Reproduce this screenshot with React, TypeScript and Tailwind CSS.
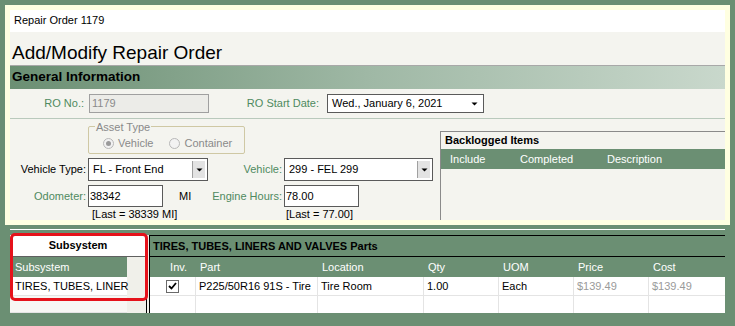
import React from "react";

const green = "text-[#4f8a60]";

function DropArrow({ boxed }: { boxed?: boolean }) {
  return (
    <div
      className={
        boxed
          ? "w-[13px] h-full bg-[#e3e3e3] border-l border-[#a0a0a0] flex items-center justify-center"
          : "w-[13px] h-full flex items-center justify-center"
      }
    >
      <svg width="7" height="4" viewBox="0 0 7 4">
        <path d="M0.5 0.5 L6.5 0.5 L3.5 3.5 Z" fill="#000" />
      </svg>
    </div>
  );
}

function Select({ value, width, boxed }: { value: string; width: string; boxed?: boolean }) {
  return (
    <div className={`${width} h-full bg-white border border-[#5a5a5a] flex items-stretch`}>
      <div className="flex-1 pl-[4px] flex items-center whitespace-nowrap overflow-hidden">{value}</div>
      <div className="py-[2px] pr-[2px]">
        <DropArrow boxed={boxed} />
      </div>
    </div>
  );
}

function Radio({ checked, label }: { checked?: boolean; label: string }) {
  return (
    <div className="flex items-center gap-[4px]">
      <div className="w-[11px] h-[11px] rounded-full border border-[#b8b8b8] bg-[#f2f2f2] flex items-center justify-center">
        {checked && <div className="w-[5px] h-[5px] rounded-full bg-[#9a9a9a]" />}
      </div>
      <span className="text-[#8a8a8a]">{label}</span>
    </div>
  );
}

function Checkbox() {
  return (
    <div className="w-[13px] h-[13px] bg-white border border-[#6a6a6a] flex items-center justify-center">
      <svg width="9" height="8" viewBox="0 0 9 8">
        <path d="M1 4 L3.5 6.5 L8 1" stroke="#000" strokeWidth="1.8" fill="none" />
      </svg>
    </div>
  );
}

const cols = [
  { name: "Inv.", w: "w-[46px]" },
  { name: "Part", w: "w-[122px]" },
  { name: "Location", w: "w-[106px]" },
  { name: "Qty", w: "w-[75px]" },
  { name: "UOM", w: "w-[75px]" },
  { name: "Price", w: "w-[75px]" },
  { name: "Cost", w: "w-[75px]" },
];

export default function App() {
  return (
    <div className="w-[735px] h-[326px] bg-[#6b8f73] p-[5px] relative overflow-hidden font-['Liberation_Sans',Arial,sans-serif] text-[11px] text-black">
      {/* main form panel */}
      <div className="bg-[#ffffe1] p-[5px] h-[220px] w-[725px]">
        <div className="h-[210px] bg-[#f4f4ef] overflow-hidden flex flex-col">
          <div className="shrink-0 h-[22px] bg-white pl-[4px] pt-[2px] flex items-start">Repair Order 1179</div>

          <div className="shrink-0 h-[34px] border-b border-[#a8a8a8] pl-[2px] flex items-end pb-[3px] text-[19px] leading-none">
            Add/Modify Repair Order
          </div>

          <div className="shrink-0 h-[23px] bg-gradient-to-r from-[#6b8f73] via-[#9fb8a5] to-[#c9d8cc] pl-[2px] flex items-center font-bold text-[13.5px]">
            General Information
          </div>

          <div className="shrink-0 h-[30px] border-b border-[#b9c9bc] flex items-center">
            <div className={`w-[74px] text-right ${green}`}>RO No.:</div>
            <div className="ml-[5px] w-[120px] h-[19px] bg-[#ececE8] border border-[#a0a0a0] text-[#8a8a8a] pl-[2px] flex items-center">
              1179
            </div>
            <div className={`w-[110px] text-right ${green}`}>RO Start Date:</div>
            <div className="ml-[8px] h-[19px] flex">
              <Select value="Wed., January 6, 2021" width="w-[157px]" />
            </div>
          </div>

          <div className="flex-1 min-h-0 flex">
            <div className="w-[430px] flex flex-col">
              <div className="shrink-0 ml-[78px] mt-[7px] w-[157px] h-[28px] border border-[#cfc8a4] rounded-[2px] relative">
                <span className="absolute left-[6px] top-[-8px] bg-[#f4f4ef] px-[1px] text-[#8a8a8a]">Asset Type</span>
                <div className="flex items-center gap-[16px] pl-[14px] pt-[8px]">
                  <Radio checked label="Vehicle" />
                  <Radio label="Container" />
                </div>
              </div>

              <div className="shrink-0 mt-[4px] h-[23px] flex items-center">
                <div className="w-[76px] text-right">Vehicle Type:</div>
                <div className="ml-[2px] h-full flex">
                  <Select value="FL - Front End" width="w-[120px]" boxed />
                </div>
                <div className={`w-[74px] text-right ${green}`}>Vehicle:</div>
                <div className="ml-[2px] h-full flex">
                  <Select value="299 - FEL 299" width="w-[149px]" boxed />
                </div>
              </div>

              <div className="shrink-0 mt-[4px] h-[22px] flex items-center">
                <div className={`w-[76px] text-right ${green}`}>Odometer:</div>
                <div className="ml-[2px] w-[75px] h-full bg-white border border-[#5a5a5a] pl-[1px] flex items-center">38342</div>
                <div className="w-[40px] pl-[16px]">MI</div>
                <div className={`w-[79px] text-right ${green}`}>Engine Hours:</div>
                <div className="ml-[2px] w-[75px] h-full bg-white border border-[#5a5a5a] pl-[1px] flex items-center">78.00</div>
              </div>

              <div className="shrink-0 mt-[1px] flex leading-[12px]">
                <div className="pl-[82px] w-[276px]">[Last = 38339 MI]</div>
                <div>[Last = 77.00]</div>
              </div>
            </div>

            <div className="mt-[12px] flex-1 border-l border-t border-[#8a8a8a] flex flex-col">
              <div className="shrink-0 h-[17px] pl-[4px] flex items-center font-bold">Backlogged Items</div>
              <div className="shrink-0 h-[20px] bg-[#6b8f73] text-white flex items-center">
                <div className="w-[79px] pl-[9px]">Include</div>
                <div className="w-[87px]">Completed</div>
                <div>Description</div>
              </div>
            </div>
          </div>
        </div>
      </div>

      {/* separator */}
      <div className="mt-[4px] ml-[5px] w-[715px] h-[1px] bg-white" />

      {/* bottom grids */}
      <div className="mt-[5px] ml-[5px] flex h-[78px]">
        <div className="w-[137px] bg-[#f0f0ea] border-r border-black flex flex-col">
          <div className="shrink-0 h-[22px] bg-white border-b border-[#606060] flex items-center justify-center font-bold">Subsystem</div>
          <div className="shrink-0 w-[117px] h-[20px] bg-[#6b8f73] text-white pl-[5px] flex items-center">Subsystem</div>
          <div className="shrink-0 w-[117px] h-[19px] bg-white pl-[5px] border-b border-[#e4e4e4] flex items-center whitespace-nowrap">TIRES, TUBES, LINER</div>
          <div className="shrink-0 w-[117px] h-[17px] bg-[#f7f7f4] border-b border-[#e4e4e4]" />
        </div>
        <div className="w-[2px] bg-[#f0f0ea]" />
        <div className="w-[576px] border-l border-t border-black flex flex-col">
          <div className="shrink-0 h-[21px] border-b border-black pl-[3px] flex items-center font-bold">
            TIRES, TUBES, LINERS AND VALVES Parts
          </div>
          <div className="shrink-0 h-[20px] flex text-white">
            {cols.map((c, i) => (
              <div key={c.name} className={`${c.w} flex items-center ${i === 0 ? "justify-end pr-[9px]" : "pl-[4px]"}`}>
                {c.name}
              </div>
            ))}
          </div>
          <div className="shrink-0 h-[19px] bg-white flex border-b border-[#e4e4e4]">
            <div className="w-[46px] border-r border-[#e4e4e4] flex items-center justify-center">
              <Checkbox />
            </div>
            <div className="w-[122px] border-r border-[#e4e4e4] pl-[3px] flex items-center whitespace-nowrap">P225/50R16 91S - Tire</div>
            <div className="w-[106px] border-r border-[#e4e4e4] pl-[3px] flex items-center">Tire Room</div>
            <div className="w-[75px] border-r border-[#e4e4e4] pl-[3px] flex items-center">1.00</div>
            <div className="w-[75px] border-r border-[#e4e4e4] pl-[3px] flex items-center">Each</div>
            <div className="w-[75px] border-r border-[#e4e4e4] pl-[3px] flex items-center text-[#9a9a9a]">$139.49</div>
            <div className="w-[75px] pl-[3px] flex items-center text-[#9a9a9a]">$139.49</div>
          </div>
          <div className="shrink-0 h-[17px] bg-white flex">
            {cols.map((c, i) => (
              <div key={c.name} className={`${c.w} ${i < cols.length - 1 ? "border-r border-[#e4e4e4]" : ""}`} />
            ))}
          </div>
        </div>
      </div>

      {/* red highlight around subsystem */}
      <div className="absolute left-[10px] top-[233px] w-[138px] h-[68px] border-[3px] border-[#e5121b] rounded-[5px]" />
    </div>
  );
}
